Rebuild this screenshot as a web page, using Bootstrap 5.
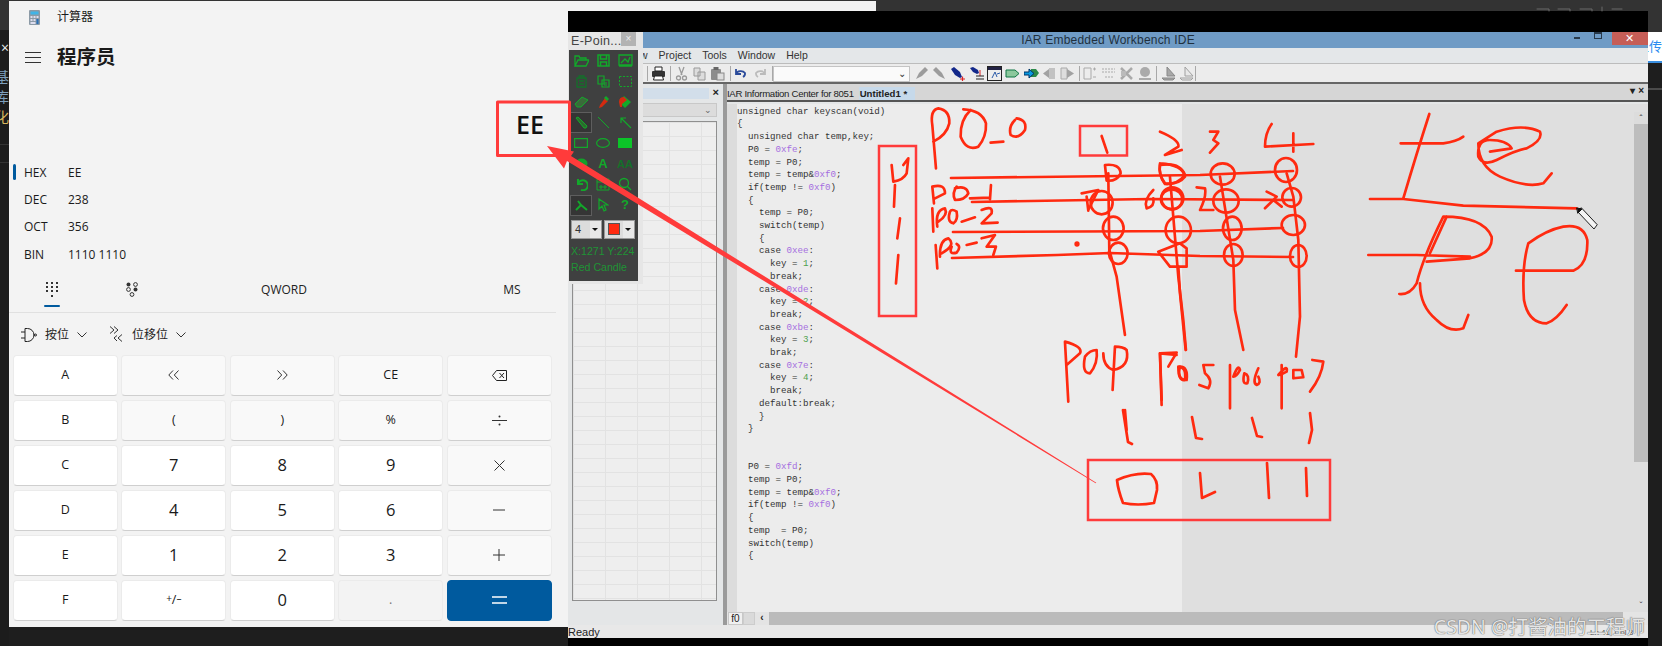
<!DOCTYPE html>
<html lang="zh">
<head>
<meta charset="utf-8">
<title>计算器</title>
<link rel="stylesheet" href="https://cdn.jsdelivr.net/npm/bootstrap@5.3.0/dist/css/bootstrap.min.css">
<style>
html,body{margin:0;height:646px;overflow:hidden}
body{background:#1e1e1e;font-family:"Open Sans","Noto Sans CJK SC",sans-serif;color:#1a1a1a}
.desk{position:relative;width:1662px;height:646px;overflow:hidden}
.topdark{position:absolute;left:876px;top:0;width:786px;height:32px;background:#333}
.topline{position:absolute;left:0;top:0;width:876px;height:1px;background:#333}
.backstrip{position:absolute;left:8px;top:1px;width:868px;height:12px;background:#f3f3f3}
.sidebar{position:absolute;left:0;top:0;width:9px;height:646px;background:#1c1c1c;overflow:hidden}
.side-top{height:30px;background:#333}
.side-ch{display:flex;justify-content:flex-end;font-size:14px;line-height:20px;white-space:nowrap;color:#7ea0bd}
.side-ch.x{color:#eee;margin-top:8px;margin-bottom:9px}
.side-ch.y{color:#d9b85c}
.side-rule{height:1px;background:#333;margin-top:17px}
.calc{position:absolute;left:9px;top:1px;width:559px;height:626px;background:#f3f3f3}
.c-title{height:32px;padding-left:20px;gap:17px;font-size:12px}
.c-head{height:48px;padding-left:16px;gap:16px}
.c-head b{font-size:19.5px;font-weight:700}
.c-display{height:78px;padding:8px 24px 0 0;font-size:25px;font-weight:600;color:#111;line-height:1}
.radix-row{height:27.4px;font-size:12px;padding-left:15px;position:relative}
.radix-row span:first-child{width:44px}
.radix-row.on::before{content:"";position:absolute;left:4px;top:5px;width:2.5px;height:16px;border-radius:2px;background:#005a9e}
.c-tabs{height:44px;width:547px;border-bottom:1px solid #e0e0e0;font-size:12px;position:relative;color:#222}
.tabcell{position:absolute;top:0;height:43px;display:flex;align-items:center;justify-content:center;padding-bottom:1px}
.tabline{position:absolute;left:35px;top:36px;width:16px;height:2.5px;background:#005a9e;border-radius:2px}
.c-bits{height:42px;padding:2px 0 0 12px;font-size:12px;color:#222}
.c-bits svg{display:block}
.keys{display:grid;grid-template-columns:repeat(5,104.6px);grid-auto-rows:41.5px;gap:3.5px 3.9px;margin-left:4px}
.keybtn{display:flex;align-items:center;justify-content:center;padding:0;background:#fff;border:1px solid #ebebeb;border-bottom-color:#cfcfcf;border-radius:4px;font-size:12.5px;color:#1a1a1a;line-height:1}
.keybtn.op{background:#f9f9f9}
.keybtn.num{font-size:16.5px}
.keybtn.dis{background:#f3f3f3;color:#777;border-bottom-color:#e3e3e3}
.keybtn.eq{background:#005a9e;border-color:#005a9e;color:#fff;font-size:22px}
.keybtn sup,.keybtn sub{font-size:10px;top:-.25em;bottom:-.1em}

.iar{position:absolute;left:568px;top:11px;width:1080px;height:635px;background:#000;display:flex;flex-direction:column;font-family:"Liberation Sans","Noto Sans CJK SC",sans-serif;font-size:10.5px;color:#222}
.i-black{height:21px;flex:none}
.i-title{height:16px;flex:none;background:#6f9bc5;color:#20303e;font-size:12px;letter-spacing:.2px;position:relative;justify-content:center}
.winbtns{position:absolute;right:0;top:0;height:13px}
.w-min{width:6px;height:2px;background:#28394a;margin-right:14px;margin-top:5px}
.w-max{width:8px;height:7px;border:1px solid #28394a;border-top-width:2px;margin-right:10px}
.w-close{width:36px;height:13px;background:#c65e57;color:#fff;font-size:11px;line-height:13px;text-align:center}
.i-menu{height:16px;flex:none;background:#e4e7e9;gap:11px;border-bottom:1px solid #bcbcbc;color:#333;padding-top:1px}
.i-tool{height:20px;flex:none;background:#ececec;border-bottom:2px solid #666;position:relative}
.t-sep{position:absolute;top:2px;width:1px;height:15px;background:#a8a8a8}
.t-ico{position:absolute;top:2px;width:15px;height:15px}
.t-combo{position:absolute;left:205px;top:2px;width:137px;height:16px;background:#fafafa;border:1px solid #c4c4c4;color:#333;font-size:10px;text-align:right;padding-right:3px;line-height:14px}
.i-main{flex:1 1 auto;min-height:0;background:#e4e6e7}
.i-left{width:155px;flex:none;padding:4px 6px 0 4px;position:relative}
.l-head{height:11px;background:#d2deea;margin:0 8px 0 0;position:relative}
.l-x{position:absolute;right:-10px;top:-4px;font-size:11px;font-weight:700}
.l-combo{height:14px;margin:4px 0 0;background:#dcdcdc;border:1px solid #c8c8c8;text-align:right;padding-right:4px;font-size:9px;line-height:12px;color:#666}
.l-list{height:480px;margin-top:4px;border:1px solid #8f8f8f;background-color:#eeeeee;background-image:linear-gradient(#e2e2e2 1px,transparent 1px),linear-gradient(90deg,#e2e2e2 1px,transparent 1px);background-size:32px 14px}
.i-edit{flex:1 1 auto;min-width:0;display:flex;flex-direction:column;border-left:4px solid #9a9a9a}
.tabrow{height:18px;flex:none;background:#d6d6d6;border-bottom:2px solid #555;padding:3px 0 0 0;position:relative;font-size:9.6px;letter-spacing:-.3px}
.tabrow .tname{line-height:13px;white-space:nowrap}
.tabrow .tact{background:#c6d9ea;font-weight:700;margin-left:5px;width:56px;letter-spacing:0;padding-left:1px}
.tab-ctl{position:absolute;right:4px;top:1px;font-size:10px;font-weight:700;line-height:12px;letter-spacing:0}
.ed-body{flex:1 1 auto;min-height:0}
.ed-gut{width:10px;flex:none;background:#dcdcdc;margin-top:2px}
.ed-code{flex:1 1 auto;margin:2px 0 0;padding-top:1.7px;font-family:"Liberation Mono",monospace;font-size:9.17px;line-height:12.7px;color:#333;background:linear-gradient(90deg,#ececec 0,#ececec 445px,#dfdfdf 445px);overflow:hidden}
.ed-code .h{color:#a56ee0}
.ed-code .n{color:#4ea04e}
.vbar{width:14px;flex:none;background:#dfdfdf;margin-top:2px;position:relative}
.vbar-thumb{position:absolute;left:0;right:0;top:20px;height:338px;background:#bdbdbd}
.vbar-up{height:12px;background:#dcdcdc;font-size:9px;text-align:center;line-height:12px;position:absolute;top:8px;left:0;right:0;color:#333}
.vbar-dn{position:absolute;left:0;right:0;bottom:2px;height:10px;font-size:9px;text-align:center;line-height:10px;color:#444}
.hbar{height:13px;flex:none;background:#e4e4e4;padding-left:1px;font-size:10px;line-height:12px}
.hbar-f{width:15px;background:#f0f0f0;border:1px solid #c8c8c8;text-align:center;overflow:hidden}
.hbar-b{width:12px;background:#dadada;border:1px solid #ccc}
.hbar-a{width:14px;text-align:center;font-weight:700}
.hbar-t{flex:1 1 auto;background:#bbb;margin-right:25px}
.i-status{height:13px;flex:none;background:#e8e8e8;font-size:11px;line-height:14px;position:relative;overflow:hidden}
.i-ln{position:absolute;left:1022px;top:3px;font-size:8px;line-height:10px;color:#555}
.i-foot{height:8px;flex:none}
.palette{position:absolute;left:0;top:21px;width:75px;height:252px;background:#e6e6e6}
.p-title{height:18px;padding-left:3px;font-size:12.5px;color:#444;letter-spacing:.3px;position:relative}
.p-x{position:absolute;left:53px;top:0;width:15px;height:14px;background:#b3b3b3;color:#eee;font-size:10px;line-height:14px;text-align:center}
.p-body{width:69px;height:231px;margin-left:1px;background:#3f4040}
.p-grid{display:grid;grid-template-columns:repeat(3,22px);grid-auto-rows:20.7px;padding:0 0 0 1px}
.p-cell{display:flex;align-items:center;justify-content:center;color:#12a92a;font-weight:700;font-size:13px;font-family:"Liberation Sans",sans-serif}
.p-cell.sel{border:1px solid #5e5e5e;background:#353535}
.p-combo{height:19px;gap:2px;margin:4px 0 0 2px}
.p-drop{width:31px;height:19px;background:#dcdcdc;border:1px solid #999;display:flex;align-items:center;font-size:11px;color:#333;padding-left:3px}
.p-drop i{display:block;margin-left:auto;width:11px;height:17px;background:#e8e8e8;position:relative}
.p-drop i::after{content:"";position:absolute;left:2px;top:7px;border:3.5px solid transparent;border-top-color:#111;border-bottom:0}
.p-red{width:12px;height:12px;background:#ff2a10;border:1px solid #555}
.p-txt{color:#1aa234;font-size:10.6px;line-height:16px;padding-left:2px;white-space:nowrap;opacity:.85}
.p-txt.first{margin-top:4px}
.uploadtag{position:absolute;left:1648px;top:32px;width:14px;height:31px;background:#fff;overflow:hidden;display:flex;justify-content:flex-end;align-items:center;color:#2a8cf0;font-size:13px;white-space:nowrap;border-bottom:2px solid #3a8fe0}
.rightline{position:absolute;left:1648px;top:88px;width:14px;height:2px;background:#4b4b4b}
.anno{position:absolute;left:0;top:0;width:1662px;height:646px;pointer-events:none}
.wmark{position:absolute;right:17px;top:614px;font-size:19.5px;line-height:26px;color:rgba(255,255,255,.85);text-shadow:0 0 1px #555,0 0 1px #777;font-family:"Noto Sans","Noto Sans CJK SC",sans-serif;white-space:nowrap}
</style>
</head>
<body>
<div class="desk">
  <div class="topdark"></div>
  <div class="topline"></div>
  <div class="backstrip"></div>

  <div class="sidebar">
    <div class="side-top"></div>
    <div class="side-ch x">×</div>
    <div class="side-ch">基</div>
    <div class="side-ch">库</div>
    <div class="side-ch y">化</div>
    <div class="side-rule"></div>
    <div class="side-rule"></div>
  </div>

  <!-- Calculator window -->
  <section class="calc">
    <div class="c-title d-flex align-items-center">
      <svg width="11" height="15" viewBox="0 0 11 15"><rect width="11" height="15" rx="1" fill="#8c9aa6"/><rect x="1.5" y="1.5" width="8" height="3" fill="#3fb4e8"/><rect x="1.5" y="6" width="2" height="2" fill="#dde"/><rect x="4.5" y="6" width="2" height="2" fill="#dde"/><rect x="7.5" y="6" width="2" height="2" fill="#dde"/><rect x="1.5" y="9" width="2" height="2" fill="#dde"/><rect x="4.5" y="9" width="2" height="2" fill="#dde"/><rect x="7.5" y="9" width="2" height="5" fill="#2a6fb5"/><rect x="1.5" y="12" width="5" height="2" fill="#dde"/></svg>
      <span>计算器</span>
    </div>
    <div class="c-head d-flex align-items-center">
      <svg width="16" height="11" viewBox="0 0 16 11"><path d="M0 .5h16M0 5.5h16M0 10.5h16" stroke="#333" fill="none"/></svg>
      <b>程序员</b>
    </div>
    <div class="c-display d-flex align-items-center justify-content-end">EE</div>
    <div class="c-radix">
      <div class="radix-row on d-flex align-items-center"><span>HEX</span><span>EE</span></div>
      <div class="radix-row d-flex align-items-center"><span>DEC</span><span>238</span></div>
      <div class="radix-row d-flex align-items-center"><span>OCT</span><span>356</span></div>
      <div class="radix-row d-flex align-items-center"><span>BIN</span><span>1110 1110</span></div>
    </div>
    <div class="c-tabs">
      <div class="tabcell" style="left:33px;width:20px"><svg width="12" height="16" viewBox="0 0 12 16" fill="#333"><g><rect x="0" y="0" width="2" height="2"/><rect x="5" y="0" width="2" height="2"/><rect x="10" y="0" width="2" height="2"/><rect x="0" y="4" width="2" height="2"/><rect x="5" y="4" width="2" height="2"/><rect x="10" y="4" width="2" height="2"/><rect x="0" y="8" width="2" height="2"/><rect x="5" y="8" width="2" height="2"/><rect x="10" y="8" width="2" height="2"/><rect x="5" y="13" width="2" height="2"/></g></svg></div>
      <div class="tabcell" style="left:113px;width:20px"><svg width="12" height="15" viewBox="0 0 12 15"><circle cx="2.5" cy="2.5" r="2" fill="#333"/><circle cx="9.5" cy="2.5" r="1.9" fill="none" stroke="#333"/><circle cx="2.5" cy="7.5" r="1.9" fill="none" stroke="#333"/><circle cx="9.5" cy="7.5" r="2" fill="#333"/><circle cx="6" cy="12.5" r="1.9" fill="none" stroke="#333"/></svg></div>
      <div class="tabcell" style="left:245px;width:60px">QWORD</div>
      <div class="tabcell" style="left:483px;width:40px">MS</div>
      <div class="tabline"></div>
    </div>
    <div class="c-bits d-flex align-items-center">
      <svg width="16" height="14" viewBox="0 0 16 14" fill="none" stroke="#222"><path d="M0 4h4M0 10h4M4 .5v13h2.5a6 6 0 0 0 0-13zM12.5 7H14"/><circle cx="14.5" cy="7" r="1"/></svg>
      <span class="ms-2">按位</span>
      <svg class="ms-2" width="10" height="6" viewBox="0 0 10 6" fill="none" stroke="#333"><path d="M.5.5 5 5 9.500.5"/></svg>
      <svg style="margin-left:22px" width="13" height="17" viewBox="0 0 13 17" fill="none" stroke="#333"><path d="M1 .5 5 4 1 7.500M5 .5 9 4 5 7.500M13 8.500 9 12l4 3.500M8 9.500 5 12l3 3"/></svg>
      <span style="margin-left:10px">位移位</span>
      <svg class="ms-2" width="10" height="6" viewBox="0 0 10 6" fill="none" stroke="#333"><path d="M.5.5 5 5 9.500.5"/></svg>
    </div>
    <div class="keys">
      <button class="keybtn">A</button>
      <button class="keybtn op"><svg width="11" height="10" viewBox="0 0 11 10" fill="none" stroke="#333"><path d="M5 .5.8 5 5 9.500M10.500.5 6.300 5l4.200 4.500"/></svg></button>
      <button class="keybtn op"><svg width="11" height="10" viewBox="0 0 11 10" fill="none" stroke="#333"><path d="M.5.500 4.700 5 .5 9.500M6 .5 10.200 5 6 9.500"/></svg></button>
      <button class="keybtn op">CE</button>
      <button class="keybtn op"><svg width="15" height="11" viewBox="0 0 15 11" fill="none" stroke="#222"><path d="M4.500.5H14.500V10.500H4.500L.5 5.500zM7.500 3l4.500 5M12 3 7.500 8"/></svg></button>
      <button class="keybtn">B</button>
      <button class="keybtn op">(</button>
      <button class="keybtn op">)</button>
      <button class="keybtn op">%</button>
      <button class="keybtn op"><svg width="15" height="11" viewBox="0 0 15 11" fill="#333"><rect y="5" width="15" height="1"/><circle cx="7.500" cy="1.500" r="1"/><circle cx="7.500" cy="9.500" r="1"/></svg></button>
      <button class="keybtn">C</button>
      <button class="keybtn num">7</button>
      <button class="keybtn num">8</button>
      <button class="keybtn num">9</button>
      <button class="keybtn op"><svg width="11" height="11" viewBox="0 0 11 11" stroke="#333"><path d="M.5.5l10 10M10.500.5l-10 10"/></svg></button>
      <button class="keybtn">D</button>
      <button class="keybtn num">4</button>
      <button class="keybtn num">5</button>
      <button class="keybtn num">6</button>
      <button class="keybtn op"><svg width="12" height="2" viewBox="0 0 12 2" stroke="#333"><path d="M0 1h12"/></svg></button>
      <button class="keybtn">E</button>
      <button class="keybtn num">1</button>
      <button class="keybtn num">2</button>
      <button class="keybtn num">3</button>
      <button class="keybtn op"><svg width="12" height="12" viewBox="0 0 12 12" stroke="#333"><path d="M0 6h12M6 0v12"/></svg></button>
      <button class="keybtn">F</button>
      <button class="keybtn"><sup>+</sup>/<sub>&#8211;</sub></button>
      <button class="keybtn num">0</button>
      <button class="keybtn dis">.</button>
      <button class="keybtn eq"><svg width="15" height="8" viewBox="0 0 15 8" stroke="#fff" stroke-width="1.500"><path d="M0 1h15M0 7h15"/></svg></button>
    </div>
  </section>

  <!-- IAR window -->
  <section class="iar">
    <div class="i-black"></div>
    <div class="i-title d-flex align-items-center">
      <span>IAR Embedded Workbench IDE</span>
      <div class="winbtns d-flex align-items-start"><div class="w-min"></div><div class="w-max"></div><div class="w-close">&#10005;</div></div>
    </div>
    <div class="i-menu d-flex align-items-center"><span>File</span><span>Edit</span><span>View</span><span>Project</span><span>Tools</span><span>Window</span><span>Help</span></div>
    <div class="i-tool">
      <div class="t-sep" style="left:79px"></div>
      <svg class="t-ico" style="left:83px" viewBox="0 0 15 15"><rect x="1" y="5" width="13" height="6" rx="1" fill="#333"/><path d="M4 1h7v4H4zM3.500 10h8l1 4h-10z" fill="#fff" stroke="#222"/></svg>
      <div class="t-sep" style="left:102px"></div>
      <svg class="t-ico" style="left:106px" viewBox="0 0 15 15" fill="none" stroke="#9a9a9a" stroke-width="1.300"><path d="M5 1l3 8M10 1 7 9"/><circle cx="4.500" cy="12" r="2"/><circle cx="10.500" cy="12" r="2"/></svg>
      <svg class="t-ico" style="left:124px" viewBox="0 0 15 15" fill="#ddd" stroke="#9a9a9a"><path d="M2 2h6v8H2zM6 6h7v8H6z"/></svg>
      <svg class="t-ico" style="left:142px" viewBox="0 0 15 15"><rect x="1" y="3" width="10" height="11" rx="1" fill="#8d8d8d"/><rect x="3.500" y="1" width="5" height="3" fill="#666"/><rect x="7" y="7" width="7" height="7" fill="#ddd" stroke="#888"/></svg>
      <div class="t-sep" style="left:162px"></div>
      <svg class="t-ico" style="left:166px" viewBox="0 0 15 15" fill="none" stroke="#2a4a9a" stroke-width="1.800"><path d="M2 8a5 4 0 0 1 9-1 4 4 0 0 1-2 4M2 3v5h5"/></svg>
      <svg class="t-ico" style="left:184px" viewBox="0 0 15 15" fill="none" stroke="#bbb" stroke-width="1.800"><path d="M13 8a5 4 0 0 0-9-1 4 4 0 0 0 2 4M13 3v5H8"/></svg>
      <div class="t-sep" style="left:204px"></div>
      <div class="t-combo">&#8964;</div>
      <svg class="t-ico" style="left:347px" viewBox="0 0 15 15"><path d="M1 13l3-6 6-6 3 3-6 6z" fill="#9c9c9c"/></svg>
      <svg class="t-ico" style="left:363px" viewBox="0 0 15 15"><path d="M14 13l-3-6-6-6-3 3 6 6z" fill="#9c9c9c"/></svg>
      <svg class="t-ico" style="left:382px" viewBox="0 0 15 15"><path d="M1 3l3-2 6 5 2 5-2 1-5-3z" fill="#13288a"/><path d="M10 13h5M12.500 10.500v5" stroke="#d22" stroke-width="1.200"/></svg>
      <svg class="t-ico" style="left:401px" viewBox="0 0 15 15"><path d="M1 2l3-1 5 3 1 3-2 1-4-2z" fill="#13288a"/><path d="M11 4v6" stroke="#d22"/><path d="M7 10h8M7 13h8" stroke="#222"/></svg>
      <svg class="t-ico" style="left:419px" viewBox="0 0 15 15"><rect x=".5" y=".5" width="14" height="14" fill="#eee" stroke="#222"/><rect x="1" y="1" width="13" height="3" fill="#224"/><path d="M5 12l3-6M8 6l2 5M10 8l3-1" stroke="#2a5aa8" fill="none"/></svg>
      <svg class="t-ico" style="left:437px" viewBox="0 0 15 15"><path d="M1 4h9l4 3.500-4 3.500H1z" fill="#8cc89c" stroke="#174"/></svg>
      <svg class="t-ico" style="left:456px" viewBox="0 0 15 15"><path d="M7 3h5l3 4-3 4H7z" fill="#2c8a4a"/><path d="M0 6h5V3l5 4.500L5 12V9H0z" fill="#0a9ae0" stroke="#036"/></svg>
      <svg class="t-ico" style="left:475px" viewBox="0 0 15 15"><path d="M6 2h6v11H6z" fill="#c2c2c2"/><path d="M0 7.500 6 3v9z" fill="#a2a2a2"/></svg>
      <svg class="t-ico" style="left:491px" viewBox="0 0 15 15"><path d="M2 2h6v11H2z" fill="#ddd" stroke="#aaa"/><path d="M15 7.500 8 3v9z" fill="#a2a2a2"/></svg>
      <div class="t-sep" style="left:511px"></div>
      <svg class="t-ico" style="left:514px" viewBox="0 0 15 15" fill="none" stroke="#aaa"><path d="M2 2h7v11H2zM11 3h3M12.500 1.500v3M11 11h3"/></svg>
      <svg class="t-ico" style="left:533px" viewBox="0 0 15 15" fill="none" stroke="#aaa" stroke-dasharray="2 1"><path d="M1 3h13M1 6h13M4 11h8"/></svg>
      <svg class="t-ico" style="left:551px" viewBox="0 0 15 15"><path d="M2 2l11 11M13 2 2 13" stroke="#aaa" stroke-width="2.500"/><rect x="2" y="5" width="5" height="5" fill="#bbb"/></svg>
      <svg class="t-ico" style="left:569px" viewBox="0 0 15 15"><circle cx="8" cy="6" r="5" fill="#aaa"/><path d="M2 13h12" stroke="#aaa" stroke-width="2"/></svg>
      <div class="t-sep" style="left:588px"></div>
      <svg class="t-ico" style="left:593px" viewBox="0 0 15 15"><path d="M6 1v9h8zM1 12h13l-2 2H3z" fill="#a8a8a8" stroke="#888"/></svg>
      <svg class="t-ico" style="left:611px" viewBox="0 0 15 15" fill="#e8e8e8" stroke="#a0a0a0"><path d="M6 1v9h8zM1 12h13l-2 2H3z"/></svg>
      <div class="t-sep" style="left:627px"></div>
    </div>
    <div class="i-main d-flex">
      <aside class="i-left">
        <div class="l-head"><span class="l-x">&#215;</span></div>
        <div class="l-combo">&#8964;</div>
        <div class="l-list"></div>
      </aside>
      <div class="i-edit">
        <div class="tabrow d-flex align-items-start"><span class="tname">IAR Information Center for 8051</span><span class="tname tact">Untitled1 *</span><span class="tab-ctl">&#9662; &#215;</span></div>
        <div class="ed-body d-flex">
          <div class="ed-gut"></div>
<pre class="ed-code">unsigned char keyscan(void)
{
  unsigned char temp,key;
  P0 = <span class="h">0xfe</span>;
  temp = P0;
  temp = temp&amp;<span class="h">0xf0</span>;
  if(temp != <span class="h">0xf0</span>)
  {
    temp = P0;
    switch(temp)
    {
    case <span class="h">0xee</span>:
      key = <span class="n">1</span>;
      break;
    case <span class="h">0xde</span>:
      key = <span class="n">2</span>;
      break;
    case <span class="h">0xbe</span>:
      key = <span class="n">3</span>;
      brak;
    case <span class="h">0x7e</span>:
      key = <span class="n">4</span>;
      break;
    default:break;
    }
  }


  P0 = <span class="h">0xfd</span>;
  temp = P0;
  temp = temp&amp;<span class="h">0xf0</span>;
  if(temp != <span class="h">0xf0</span>)
  {
  temp  = P0;
  switch(temp)
  {</pre>
          <div class="vbar"><div class="vbar-up">&#710;</div><div class="vbar-thumb"></div><div class="vbar-dn">&#711;</div></div>
        </div>
        <div class="hbar d-flex align-items-stretch"><div class="hbar-f">f0</div><div class="hbar-b"></div><div class="hbar-a">&#8249;</div><div class="hbar-t"></div></div>
      </div>
    </div>
    <div class="i-status">Ready<span class="i-ln">Ln 41, Col 3</span></div>
    <div class="i-foot"></div>

    <!-- floating E-Pointer palette -->
    <div class="palette">
      <div class="p-title d-flex align-items-center">E-Poin...<span class="p-x">&#215;</span></div>
      <div class="p-body">
        <div class="p-grid">
          <div class="p-cell"><svg width="15" height="13" viewBox="0 0 15 13" fill="none" stroke="#12a92a" stroke-width="1.300"><path d="M1 12V2h4l1 2h6v2M1 12l3-6h11l-3 6z"/></svg></div>
          <div class="p-cell"><svg width="13" height="13" viewBox="0 0 13 13" fill="none" stroke="#12a92a" stroke-width="1.500"><path d="M1 1h11v11H1zM3.500 1v4h6V1M3.500 12V8h6v4"/></svg></div>
          <div class="p-cell"><svg width="15" height="13" viewBox="0 0 15 13" fill="none" stroke="#12a92a" stroke-width="1.300"><path d="M1 1h13v10H1zM3 9l4-4 3 3 2-5M1 12h13"/></svg></div>
          <div class="p-cell"><svg width="13" height="13" viewBox="0 0 13 13" fill="none" stroke="#14702a" stroke-width="1.300"><path d="M2 3h9v9H2zM4 1h5v2H4zM4 6h5M4 9h5"/></svg></div>
          <div class="p-cell"><svg width="13" height="13" viewBox="0 0 13 13" fill="none" stroke="#12a92a" stroke-width="1.200"><path d="M1 1h6v8H1zM5 5h7v7H5zM7 8h3M7 10h3"/></svg></div>
          <div class="p-cell"><svg width="13" height="11" viewBox="0 0 13 11" fill="none" stroke="#12a92a" stroke-dasharray="2 1.500"><path d="M.5.5h12v10H.5z"/></svg></div>
          <div class="p-cell"><svg width="15" height="12" viewBox="0 0 15 12"><path d="M1 8l7-7 6 3-7 7H3z" fill="#3a6a3a" stroke="#12a92a"/></svg></div>
          <div class="p-cell"><svg width="13" height="14" viewBox="0 0 13 14"><path d="M8 3l3 3-6 6-3 1 1-3z" fill="#d42a10"/><path d="M9 1l3 3-2 2-3-3z" fill="#12a92a"/></svg></div>
          <div class="p-cell"><svg width="14" height="14" viewBox="0 0 14 14"><path d="M6 1l7 6-6 6-6-6z" fill="#12a92a"/><path d="M1 7q0-5 5-5l3 3-5 4v3H2z" fill="#d42a10"/></svg></div>
          <div class="p-cell sel"><svg width="13" height="13" viewBox="0 0 13 13"><path d="M1 2 3 1l9 9-1 2-2 0z" fill="#2c6a2c" stroke="#12a92a"/></svg></div>
          <div class="p-cell"><svg width="13" height="13" viewBox="0 0 13 13"><path d="M1 1l11 11" stroke="#12a92a"/></svg></div>
          <div class="p-cell"><svg width="13" height="13" viewBox="0 0 13 13" fill="none" stroke="#12a92a" stroke-width="1.200"><path d="M12 12 2 2M2 7V2h5"/></svg></div>
          <div class="p-cell"><svg width="14" height="10" viewBox="0 0 14 10" fill="none" stroke="#12a92a" stroke-width="1.200"><path d="M.6.6h12.800v8.800H.6z"/></svg></div>
          <div class="p-cell"><svg width="14" height="10" viewBox="0 0 14 10" fill="none" stroke="#12a92a" stroke-width="1.200"><ellipse cx="7" cy="5" rx="6.400" ry="4.400"/></svg></div>
          <div class="p-cell"><svg width="14" height="10" viewBox="0 0 14 10"><rect width="14" height="10" fill="#0bc428"/></svg></div>
          <div class="p-cell"><svg width="13" height="11" viewBox="0 0 13 11"><ellipse cx="6.500" cy="5.500" rx="6" ry="5" fill="#14a02a"/></svg></div>
          <div class="p-cell">A</div>
          <div class="p-cell" style="color:#14702a;font-size:11px">AA</div>
          <div class="p-cell"><svg width="13" height="13" viewBox="0 0 13 13" fill="none" stroke="#12a92a" stroke-width="2"><path d="M3 1v5h5M3 6a5 5 0 1 1 3 6"/></svg></div>
          <div class="p-cell"><svg width="14" height="14" viewBox="0 0 14 14" fill="none" stroke="#12a92a"><path d="M1 2h12v11H1zM1 5h12M4 9h2v2H4zM8 9h2v2H8z"/></svg></div>
          <div class="p-cell"><svg width="14" height="14" viewBox="0 0 14 14" fill="none" stroke="#12a92a" stroke-width="1.300"><circle cx="6" cy="6" r="4.500"/><path d="M9 9l4 4"/></svg></div>
          <div class="p-cell sel"><svg width="13" height="13" viewBox="0 0 13 13" fill="none" stroke="#12a92a" stroke-width="2"><path d="M1 11 6 6M6 6 12 11M6 6 3 2"/></svg></div>
          <div class="p-cell"><svg width="11" height="15" viewBox="0 0 11 15" fill="none" stroke="#12a92a" stroke-width="1.200"><path d="M1 1v10l3-3 2 5 2-1-2-5h4z"/></svg></div>
          <div class="p-cell">?</div>
        </div>
        <div class="p-combo d-flex">
          <div class="p-drop">4<i></i></div>
          <div class="p-drop"><span class="p-red"></span><i></i></div>
        </div>
        <div class="p-txt first">X:1271 Y:224</div>
        <div class="p-txt">Red Candle</div>
      </div>
    </div>
  </section>

  <div class="uploadtag">上传</div>
  <div class="rightline"></div>

  <!-- annotations drawn on the recording -->
  <svg class="anno" viewBox="0 0 1662 646" fill="none" stroke-linecap="round" stroke-linejoin="round">
    <g stroke="#6a6a6a" stroke-width="1"><path d="M1537 9h12v2M1558 9h12v2M1580 9h12v2M1602 7v4M1612 9h10"/></g>
    <!-- EE box + arrow -->
    <rect x="497.500" y="102" width="72" height="53.500" stroke="#ff3b3b" stroke-width="3"/>
    <path d="M547 146 574 151.500 571 156 1096.300 482.800 1095.700 483.200 567 161 564 168.500Z" fill="#ff3b3b"/>
    <!-- boxes -->
    <g stroke="#ff3b3b" stroke-width="2.500" stroke-linejoin="miter">
      <rect x="879" y="146" width="37" height="170"/>
      <rect x="1080" y="126" width="47" height="29.500"/>
      <rect x="1088" y="460" width="242" height="60"/>
    </g>
    <g stroke="#ff2a10" stroke-width="2.700">
      <!-- long lines, page coordinates -->
      <path d="M951 178 1037 177 1200 175 1293 171"/>
      <path d="M972 202 1150 199 1293 200"/>
      <path d="M953 232 1200 231 1283 228"/>
      <path d="M952 258 1057 255 1110 253 1200 256 1293 257"/>
      <path d="M1123 410 1128 442 1132 444M1192 417 1196 438 1202 439M1252 418 1257 436 1262 437M1310 413 1312 430 1309 443"/>
      <path d="M1117 480Q1135 472 1151 474 1158 480 1157 490L1154 503Q1138 506 1123 503 1118 490 1117 480Z"/>
      <path d="M1200 473 1202 498 1215 492M1267 463 1269 498M1306 468 1307 496"/>
      <circle cx="1077" cy="244" r="1.300"/>
      <g transform="translate(700 90) scale(.3333)" stroke-width="8">
        <path d="M708 235 697 105Q690 60 715 55 750 60 748 100 740 135 700 155"/>
        <path d="M812 60Q780 90 782 140 800 185 835 170 860 140 858 100 845 60 790 58"/>
        <path d="M872 158 910 155M945 90Q925 110 932 135 955 150 975 120 982 90 950 85"/>
        <path d="M1205 138 1222 188"/>
        <path d="M1225 250 1228 480 1250 560 1275 735M1410 260 1435 560 1450 690 1458 780"/>
        <path d="M1215 225Q1260 220 1262 250 1250 275 1220 272Z"/>
        <ellipse cx="1205" cy="338" rx="33" ry="35"/>
        <ellipse cx="1240" cy="415" rx="31" ry="35"/>
        <ellipse cx="1255" cy="490" rx="28" ry="32"/>
        <path d="M1380 225Q1440 215 1455 255 1430 285 1395 282 1375 255 1380 225"/>
        <ellipse cx="1417" cy="325" rx="33" ry="33"/>
        <ellipse cx="1435" cy="420" rx="38" ry="40"/>
        <path d="M1440 460 1375 485 1410 530 1460 530 1460 475Z"/>
        <path d="M1145 310 1195 300 1165 360M1160 320 1165 362"/>
        <path d="M1360 300Q1330 330 1340 355 1365 350 1360 325"/>
        <path d="M702 340 697 290Q735 280 735 310L705 325M770 290Q755 310 765 330 795 330 805 310 800 285 765 295M810 325 870 323M873 285 870 328"/>
        <path d="M700 425 697 355M712 410Q705 360 735 355 745 375 715 395M750 365Q740 395 760 400 775 390 770 365 755 355 750 365M785 395 825 382M845 360Q880 345 875 370L845 400 893 398"/>
        <path d="M712 535 707 465M720 500Q718 450 745 445 770 465 725 490M755 470Q745 495 770 488 785 470 770 462M800 465 830 458M845 445 885 435 860 470 888 470 880 495"/>
        <path d="M575 225 580 275Q610 270 620 250L625 205 610 225M585 285 582 350M600 385 592 445M595 495 588 580"/>
        <path d="M1105 935 1095 755Q1150 770 1140 790L1100 825M1155 800Q1145 850 1170 850 1195 820 1190 780 1170 780 1155 800M1210 790Q1210 830 1240 840 1290 830 1280 780 1270 770 1245 770L1238 900"/>
        <path d="M1275 960 1280 1020M1385 945 1380 790 1430 795M1440 830Q1430 870 1460 870 1465 830 1440 830"/>
      </g>
      <g transform="translate(1150 0) scale(.3333)" stroke-width="8">
        <path d="M30 395Q90 420 85 440L45 465 95 450M180 395 205 395 190 420 205 430 180 458M365 372Q345 400 345 440L490 432M430 400 430 455"/>
        <path d="M30 490Q100 495 105 530 85 555 45 550 25 525 30 490"/>
        <ellipse cx="218" cy="522" rx="36" ry="32"/>
        <ellipse cx="408" cy="510" rx="33" ry="36"/>
        <ellipse cx="65" cy="598" rx="32" ry="30"/>
        <ellipse cx="228" cy="603" rx="38" ry="35"/>
        <ellipse cx="425" cy="592" rx="28" ry="28"/>
        <ellipse cx="247" cy="685" rx="28" ry="35"/>
        <ellipse cx="430" cy="675" rx="35" ry="30"/>
        <ellipse cx="250" cy="765" rx="28" ry="33"/>
        <ellipse cx="445" cy="768" rx="25" ry="33"/>
        <path d="M140 562 165 565Q170 590 150 630L190 630M350 575 380 590 345 625 370 600 395 620"/>
        <path d="M85 800 90 880 107 1050M210 530 250 780 255 930 280 1050M410 520 430 590 445 720 450 950 438 1070"/>
        <path d="M35 1200 30 1060 80 1058 55 1100M85 1100Q85 1145 105 1140 110 1100 85 1100M190 1095 160 1095 165 1120Q190 1140 175 1165L148 1155"/>
        <path d="M240 1225 240 1095M250 1130Q265 1090 270 1110 260 1130 250 1130M283 1120Q275 1155 292 1150 300 1125 283 1120M325 1105Q305 1150 320 1155 335 1150 325 1130"/>
        <path d="M395 1225 395 1095M385 1125Q415 1090 410 1115L390 1125M430 1110 430 1135 460 1132 455 1110ZM487 1080 520 1085Q515 1130 480 1175"/>
        <path d="M838 342Q800 460 760 595M752 430 880 430Q920 425 940 410"/>
        <path d="M1020 455 1085 445Q1070 420 1020 420 980 420 985 470 1000 500 1040 480 1100 450 1130 445 1180 420 1170 395 1120 370 1040 395L985 430Q985 500 1050 530 1130 565 1180 550L1205 520"/>
        <path d="M660 597 760 597 940 617 1280 625"/>
        <path d="M655 765 800 765 960 770M748 882Q780 885 800 850 820 770 880 650 1000 650 1025 710 1030 760 960 775L830 785M840 760 890 650M810 850Q810 920 860 960 900 1000 940 985L955 945"/>
        <path d="M1098 812 1270 812Q1315 795 1312 720 1300 670 1240 680 1190 690 1135 730 1115 800 1122 900 1135 970 1190 970 1220 960 1250 915"/>
      </g>
    </g>
    <path d="M1581 208 1578 212 1594 229 1597 225Z" fill="#f4f4f4" stroke="#222" stroke-width="1"/>
    <path d="M1577 208 1582 209 1578 213Z" fill="#111" stroke="#111"/>
  </svg>
  <div class="wmark">CSDN @打酱油的工程师</div>
</div>
<script src="https://cdn.jsdelivr.net/npm/bootstrap@5.3.0/dist/js/bootstrap.bundle.min.js"></script>
</body>
</html>
